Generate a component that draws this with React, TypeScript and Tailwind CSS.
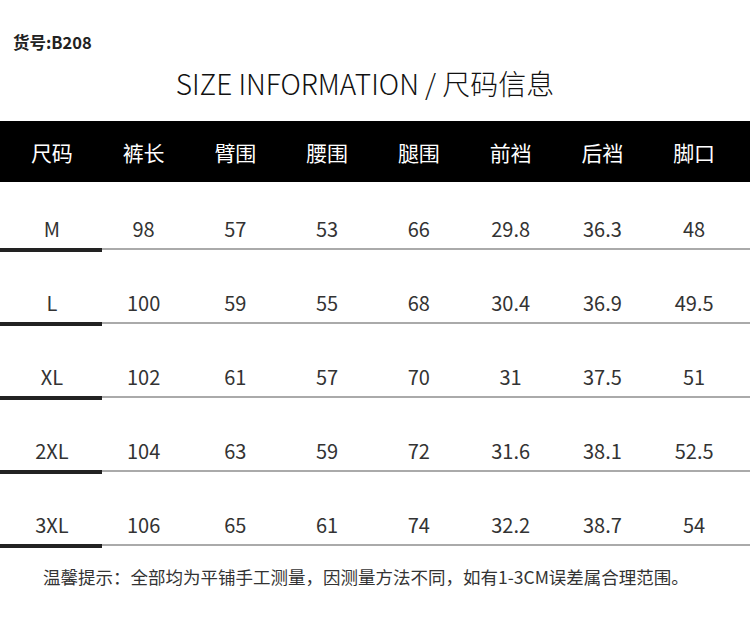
const headers = ["尺码", "裤长", "臂围", "腰围", "腿围", "前裆", "后裆", "脚口"];

const rows = [
  ["M", "98", "57", "53", "66", "29.8", "36.3", "48"],
  ["L", "100", "59", "55", "68", "30.4", "36.9", "49.5"],
  ["XL", "102", "61", "57", "70", "31", "37.5", "51"],
  ["2XL", "104", "63", "59", "72", "31.6", "38.1", "52.5"],
  ["3XL", "106", "65", "61", "74", "32.2", "38.7", "54"],
];

const font = "font-['Noto_Sans_CJK_SC','Noto_Sans',sans-serif]";

export default function App() {
  return (
    <div className={`w-[750px] h-[621px] bg-white overflow-hidden ${font}`}>
      {/* item number */}
      <div className="pt-[31px] pl-[13px] text-[16.5px] font-bold leading-[22px] text-[#222]">
        货号:B208
      </div>

      {/* title */}
      <div className="mt-[12px] flex justify-center pr-[20px]">
        <h1 className="text-[28px] font-light leading-[36px] text-[#111]">
          SIZE INFORMATION / 尺码信息
        </h1>
      </div>

      {/* header bar */}
      <div className="mt-[20px] h-[61px] bg-black pl-[6px] pr-[10px] grid grid-cols-8 items-center">
        {headers.map((h) => (
          <div key={h} className="text-center text-[21px] leading-[28px] text-white">
            {h}
          </div>
        ))}
      </div>

      {/* size rows */}
      {rows.map((r, i) => (
        <div key={r[0]} className={i === 0 ? "pt-[33px]" : "pt-[37px]"}>
          <div className="pl-[6px] pr-[10px] grid grid-cols-8 h-[28px] items-center">
            {r.map((v, j) => (
              <div key={j} className="text-center text-[20px] leading-[28px] text-[#333]">
                {v}
              </div>
            ))}
          </div>
          <div className="mt-[5px] flex items-start">
            <div className="w-[102px] h-[4px] bg-[#222]" />
            <div className="flex-1 h-[2px] bg-[#aaa]" />
          </div>
        </div>
      ))}

      {/* note */}
      <p className="mt-[17px] pl-[43px] text-[17.5px] leading-[24px] text-[#333]">
        温馨提示：全部均为平铺手工测量，因测量方法不同，如有1-3CM误差属合理范围。
      </p>
    </div>
  );
}
